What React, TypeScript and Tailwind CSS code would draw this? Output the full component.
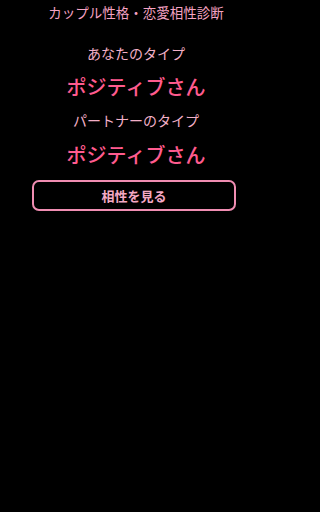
export default function App() {
  const font = { fontFamily: '"Noto Sans CJK JP", "Noto Sans", sans-serif' };
  return (
    <div className="min-h-screen w-full bg-black" style={font}>
      <div className="flex w-[272px] flex-col items-center">
        <h1 className="mt-[3px] text-[13.5px] leading-[18px] text-[#f5a3c3]">
          カップル性格・恋愛相性診断
        </h1>
        <p className="mt-[22px] text-[14px] leading-[20px] text-[#f3b0c8]">あなたのタイプ</p>
        <p className="mt-[11px] text-[20px] leading-[26px] font-medium text-[#ff5b8e]">ポジティブさん</p>
        <p className="mt-[10px] text-[14px] leading-[20px] text-[#f3b0c8]">パートナーのタイプ</p>
        <p className="mt-[12px] text-[20px] leading-[26px] font-medium text-[#ff5b8e]">ポジティブさん</p>
        <button
          type="button"
          className="mt-[12px] h-[31px] w-[204px] -translate-x-[2px] rounded-[7px] border-2 border-[#f08db2] bg-black text-[13px] font-bold text-[#f5a8c4]"
        >
          相性を見る
        </button>
      </div>
    </div>
  );
}
